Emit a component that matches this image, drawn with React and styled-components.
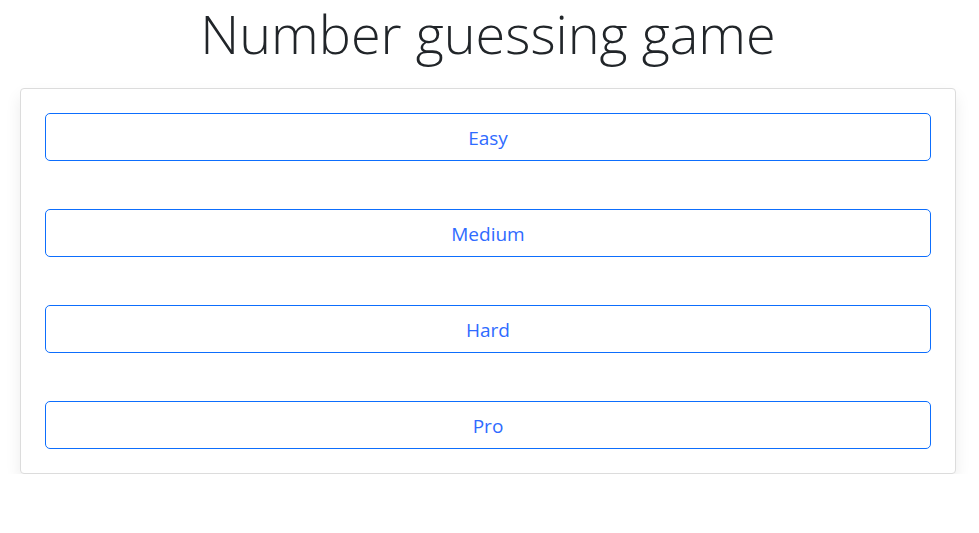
import styled, { createGlobalStyle } from "styled-components";

const Global = createGlobalStyle`
  body {
    margin: 0;
    background: #fff;
    font-family: "Open Sans", "Noto Sans", sans-serif;
    color: #212529;
  }
`;

const Page = styled.div`
  padding: 0 23px 0 20px;
`;

const Title = styled.h1`
  margin: 0 0 21px;
  font-size: 54px;
  font-weight: 300;
  line-height: 67px;
  text-align: center;
  color: #212529;
`;

const Card = styled.div`
  display: flex;
  flex-direction: column;
  gap: 48px;
  padding: 24px;
  border: 1px solid #dcdcdc;
  border-radius: 4px;
  box-shadow: 0 8px 16px rgba(0, 0, 0, 0.08);
  background: #fff;
`;

const Level = styled.button`
  height: 48px;
  padding: 10px 16px 8px;
  border: 1px solid #0d6efd;
  border-radius: 5px;
  background: transparent;
  color: #2f6bff;
  font-family: "Open Sans", "Noto Sans", sans-serif;
  font-size: 19px;
  cursor: pointer;
`;

const levels = ["Easy", "Medium", "Hard", "Pro"];

const App = () => {
  return (
    <Page>
      <Global />
      <Title>Number guessing game</Title>
      <Card>
        {levels.map((l) => (
          <Level key={l}>{l}</Level>
        ))}
      </Card>
    </Page>
  );
};

export default App;
